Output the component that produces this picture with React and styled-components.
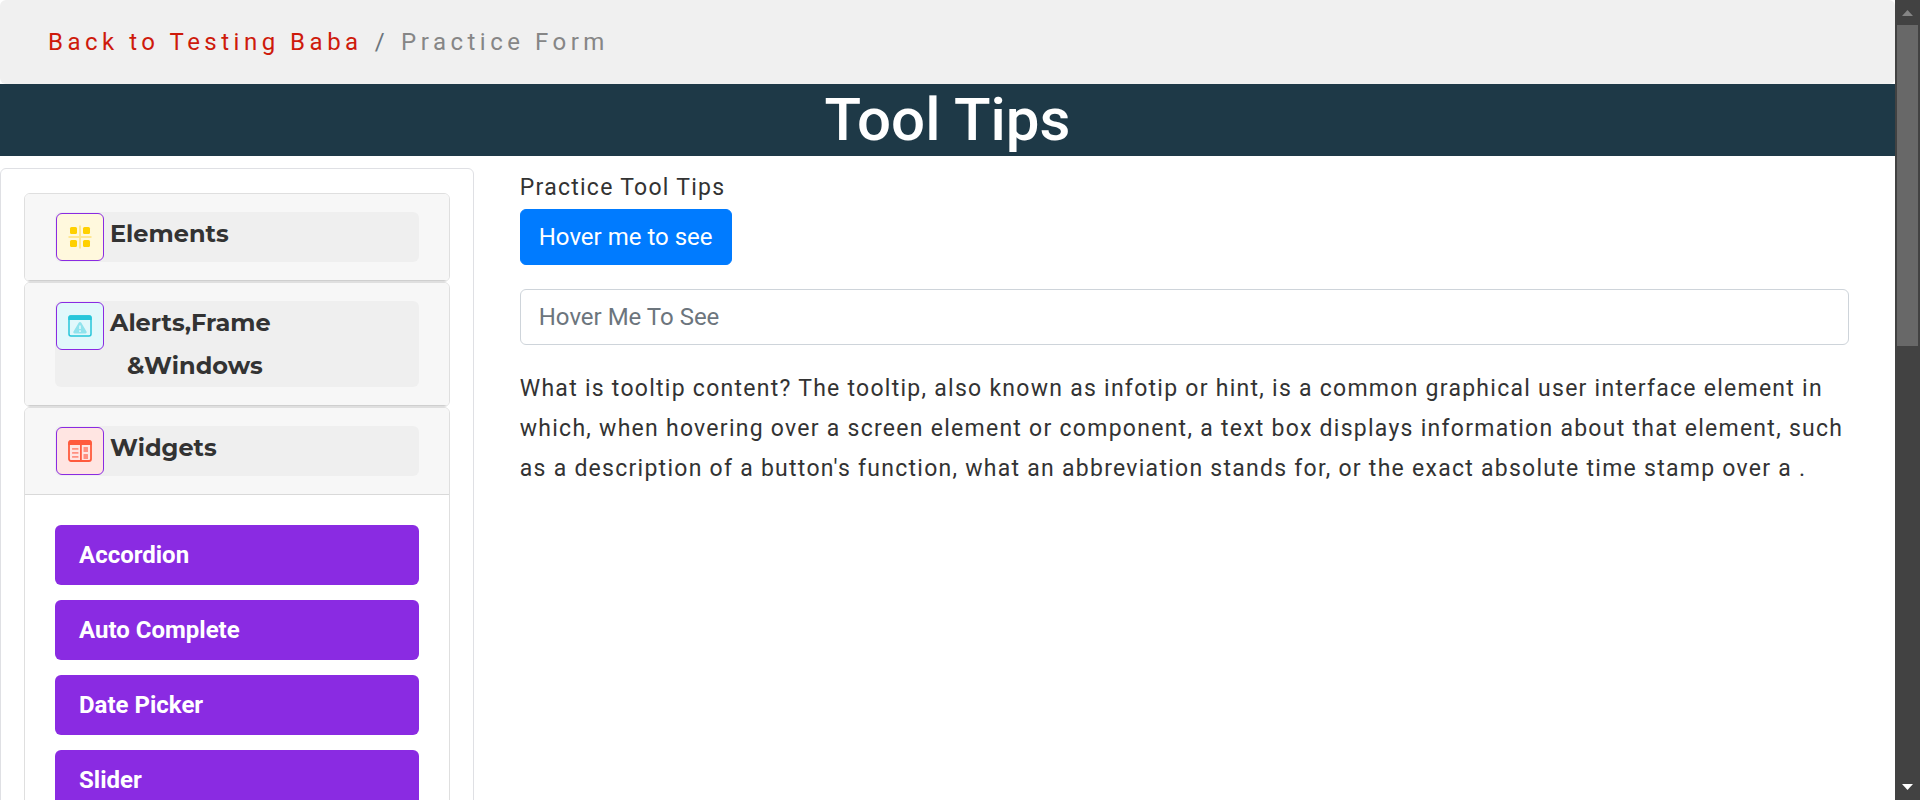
import React from "react";
import styled, { createGlobalStyle, css } from "styled-components";

const GlobalStyle = createGlobalStyle`
  *, *::before, *::after { box-sizing: border-box; }
  body {
    margin: 0;
    background: #fff;
    color: #333;
    font-family: Roboto, "Liberation Sans", sans-serif;
    font-size: 24px;
    line-height: 36px;
  }
`;

const Shell = styled.div`
  display: grid;
  grid-template-columns: minmax(0, 1fr) 25px;
  height: 100vh;
`;

const Page = styled.div`
  overflow: hidden;
`;

const Breadcrumb = styled.nav`
  display: flex;
  gap: 12px;
  padding: 24px 48px;
  border-radius: 6px;
  background: #f0f0f0;
  color: #6c757d;
  letter-spacing: 0.1875em;
`;

const BackLink = styled.a`
  color: #ce1a0b;
  text-decoration: none;
`;

const Current = styled.span`
  color: #868686;
`;

const Title = styled.h1`
  margin: 0 0 12px;
  background: #1e3947;
  color: #fff;
  font-size: 60px;
  font-weight: 500;
  line-height: 72px;
  text-align: center;
`;

const Columns = styled.div`
  display: grid;
  grid-template-columns: minmax(0, 1fr) minmax(0, 3fr);
`;

const Sidebar = styled.aside`
  padding: 24px 23px;
  border: 1px solid #dfe0e4;
  border-radius: 6px;
`;

const Group = styled.section`
  border: 1px solid #dfdfdf;
  border-radius: 6px;
  overflow: hidden;
`;

const GroupHeader = styled.h2`
  margin: 0;
  padding: 18px 30px;
  border-bottom: 1px solid ${(p) => (p.$open ? "#d9d9d9" : "#cfcfcf")};
  background: #f7f7f7;
`;

const GroupToggle = styled.button`
  display: flex;
  align-items: flex-start;
  gap: 5px;
  width: 100%;
  padding: 0;
  border: 0;
  border-radius: 6px;
  background: #efefef;
  color: #333;
  font-family: Montserrat, Inter, sans-serif;
  font-size: 24px;
  font-weight: 700;
  line-height: 43px;
  text-align: left;
`;

const GroupName = styled.span`
  display: block;
`;

const SecondLine = styled.span`
  display: block;
  padding-left: 17px;
`;

const tints = {
  yellow: css`background: #fff8dd;`,
  cyan: css`background: #e1f8fb;`,
  red: css`background: #ffe5e2;`,
};

const IconTile = styled.span`
  display: flex;
  flex: none;
  align-items: center;
  justify-content: center;
  width: 48px;
  height: 48px;
  margin: 1px;
  border: 1px solid #8a2be2;
  border-radius: 6px;
  ${(p) => tints[p.$tint]}
`;

const LinkList = styled.ul`
  display: grid;
  gap: 15px;
  margin: 0;
  padding: 30px;
  list-style: none;
`;

const ItemLink = styled.a`
  display: block;
  padding: 12px 24px;
  border-radius: 6px;
  background: #8a2be2;
  color: #fff;
  font-weight: 700;
  text-decoration: none;
`;

const Main = styled.main`
  padding: 0 46px;
`;

const Text = styled.p`
  margin: 0;
  font-size: 23px;
  line-height: 40px;
  letter-spacing: 0.055em;
`;

const HoverButton = styled.button`
  display: block;
  margin: 1px 0 24px;
  padding: 9px 18px;
  border: 1px solid #007bff;
  border-radius: 6px;
  background: #007bff;
  color: #fff;
  font: inherit;
`;

const HoverInput = styled.input`
  display: block;
  width: 100%;
  height: 56px;
  margin-bottom: 24px;
  padding: 9px 18px;
  border: 1px solid #ced4da;
  border-radius: 6px;
  background: #fff;
  color: #495057;
  font: inherit;

  &::placeholder {
    color: #6c757d;
    opacity: 1;
  }
`;

const ScrollTrack = styled.div`
  display: flex;
  flex-direction: column;
  background: #424242;
`;

const ScrollArrow = styled.svg`
  display: block;
  flex: none;
  width: 25px;
  height: 25px;
`;

const ScrollRun = styled.div`
  display: grid;
  flex: 1;
  grid-template-rows: 3fr 4fr;
  padding: 0 2px;
`;

const ScrollThumb = styled.div`
  background: #686868;
`;

function ElementsIcon() {
  return (
    <svg width="24" height="24" viewBox="0 0 24 24" aria-hidden="true">
      <g fill="#ffe791">
        <rect x="11" y="0.500" width="2" height="23" />
        <rect x="0.500" y="11" width="23" height="2" />
      </g>
      <g fill="#ffd000">
        <rect x="2" y="2" width="7" height="7" rx="1.5" />
        <rect x="15" y="2" width="7" height="7" rx="1.5" />
        <rect x="2" y="15" width="7" height="7" rx="1.5" />
        <rect x="15" y="15" width="7" height="7" rx="1.5" />
      </g>
    </svg>
  );
}

function AlertsIcon() {
  return (
    <svg width="24" height="24" viewBox="0 0 24 24" aria-hidden="true">
      <rect x="1" y="2" width="22" height="20" rx="2" fill="none" stroke="#26c6da" strokeWidth="1.5" />
      <path d="M0.3 6V3.5a2.2 2.2 0 0 1 2.2-2.2h19a2.2 2.2 0 0 1 2.2 2.2V6z" fill="#26c6da" />
      <path d="M12 8c.6 0 1 .3 1.300 .8l5.200 8.800c.6 1-.1 1.900-1.100 1.900H6.600c-1 0-1.700-.9-1.100-1.900l5.200-8.800c.3-.5.7-.8 1.300-.8z" fill="#90e3ed" />
      <path d="M11.200 11.500h1.600v3.500h-1.600zM11.200 16.300h1.600v1.600h-1.600z" fill="#e1f8fb" />
    </svg>
  );
}

function WidgetsIcon() {
  return (
    <svg width="24" height="24" viewBox="0 0 24 24" aria-hidden="true">
      <rect x="1" y="2" width="22" height="20" rx="2" fill="none" stroke="#ff5a3d" strokeWidth="1.8" />
      <path d="M0.3 6V3.500a2.200 2.200 0 0 1 2.200-2.200h19a2.200 2.200 0 0 1 2.200 2.200V6z" fill="#ff5a3d" />
      <rect x="12" y="5" width="1.800" height="17" fill="#ff5a3d" />
      <g fill="#ff9080">
        <rect x="4" y="9" width="6.500" height="1.800" rx="0.500" />
        <rect x="4" y="13" width="6.500" height="1.800" rx="0.500" />
        <rect x="4" y="17" width="6.500" height="1.800" rx="0.500" />
        <rect x="15.500" y="8" width="4.500" height="5" rx="0.500" />
        <rect x="15.500" y="15" width="4.500" height="5" rx="0.500" />
      </g>
    </svg>
  );
}

const widgetLinks = ["Accordion", "Auto Complete", "Date Picker", "Slider"];

export default function App() {
  return (
    <>
      <GlobalStyle />
      <Shell>
        <Page>
          <Breadcrumb aria-label="Breadcrumb">
            <BackLink href="#home">Back to Testing Baba</BackLink>
            <span>/</span>
            <Current>Practice Form</Current>
          </Breadcrumb>
          <Title>Tool Tips</Title>
          <Columns>
            <Sidebar>
              <Group>
                <GroupHeader>
                  <GroupToggle type="button">
                    <IconTile $tint="yellow"><ElementsIcon /></IconTile>
                    <GroupName>Elements</GroupName>
                  </GroupToggle>
                </GroupHeader>
              </Group>
              <Group>
                <GroupHeader>
                  <GroupToggle type="button">
                    <IconTile $tint="cyan"><AlertsIcon /></IconTile>
                    <GroupName>
                      Alerts,Frame
                      <SecondLine>&amp;Windows</SecondLine>
                    </GroupName>
                  </GroupToggle>
                </GroupHeader>
              </Group>
              <Group>
                <GroupHeader $open>
                  <GroupToggle type="button" aria-expanded="true">
                    <IconTile $tint="red"><WidgetsIcon /></IconTile>
                    <GroupName>Widgets</GroupName>
                  </GroupToggle>
                </GroupHeader>
                <LinkList>
                  {widgetLinks.map((name) => (
                    <li key={name}>
                      <ItemLink href="#widget">{name}</ItemLink>
                    </li>
                  ))}
                </LinkList>
              </Group>
            </Sidebar>
            <Main>
              <Text>Practice Tool Tips</Text>
              <HoverButton type="button">Hover me to see</HoverButton>
              <HoverInput type="text" aria-label="Hover Me To See" placeholder="Hover Me To See" />
              <Text>
                What is tooltip content? The tooltip, also known as infotip or hint, is a common
                graphical user interface element in which, when hovering over a screen element or
                component, a text box displays information about that element, such as a description
                of a button's function, what an abbreviation stands for, or the exact absolute time
                stamp over a .
              </Text>
            </Main>
          </Columns>
        </Page>
        <ScrollTrack aria-hidden="true">
          <ScrollArrow viewBox="0 0 25 25">
            <path d="M7 16L12.500 10L18 16z" fill="#858585" />
          </ScrollArrow>
          <ScrollRun>
            <ScrollThumb />
          </ScrollRun>
          <ScrollArrow viewBox="0 0 25 25">
            <path d="M7 9H18L12.500 15z" fill="#fff" />
          </ScrollArrow>
        </ScrollTrack>
      </Shell>
    </>
  );
}
